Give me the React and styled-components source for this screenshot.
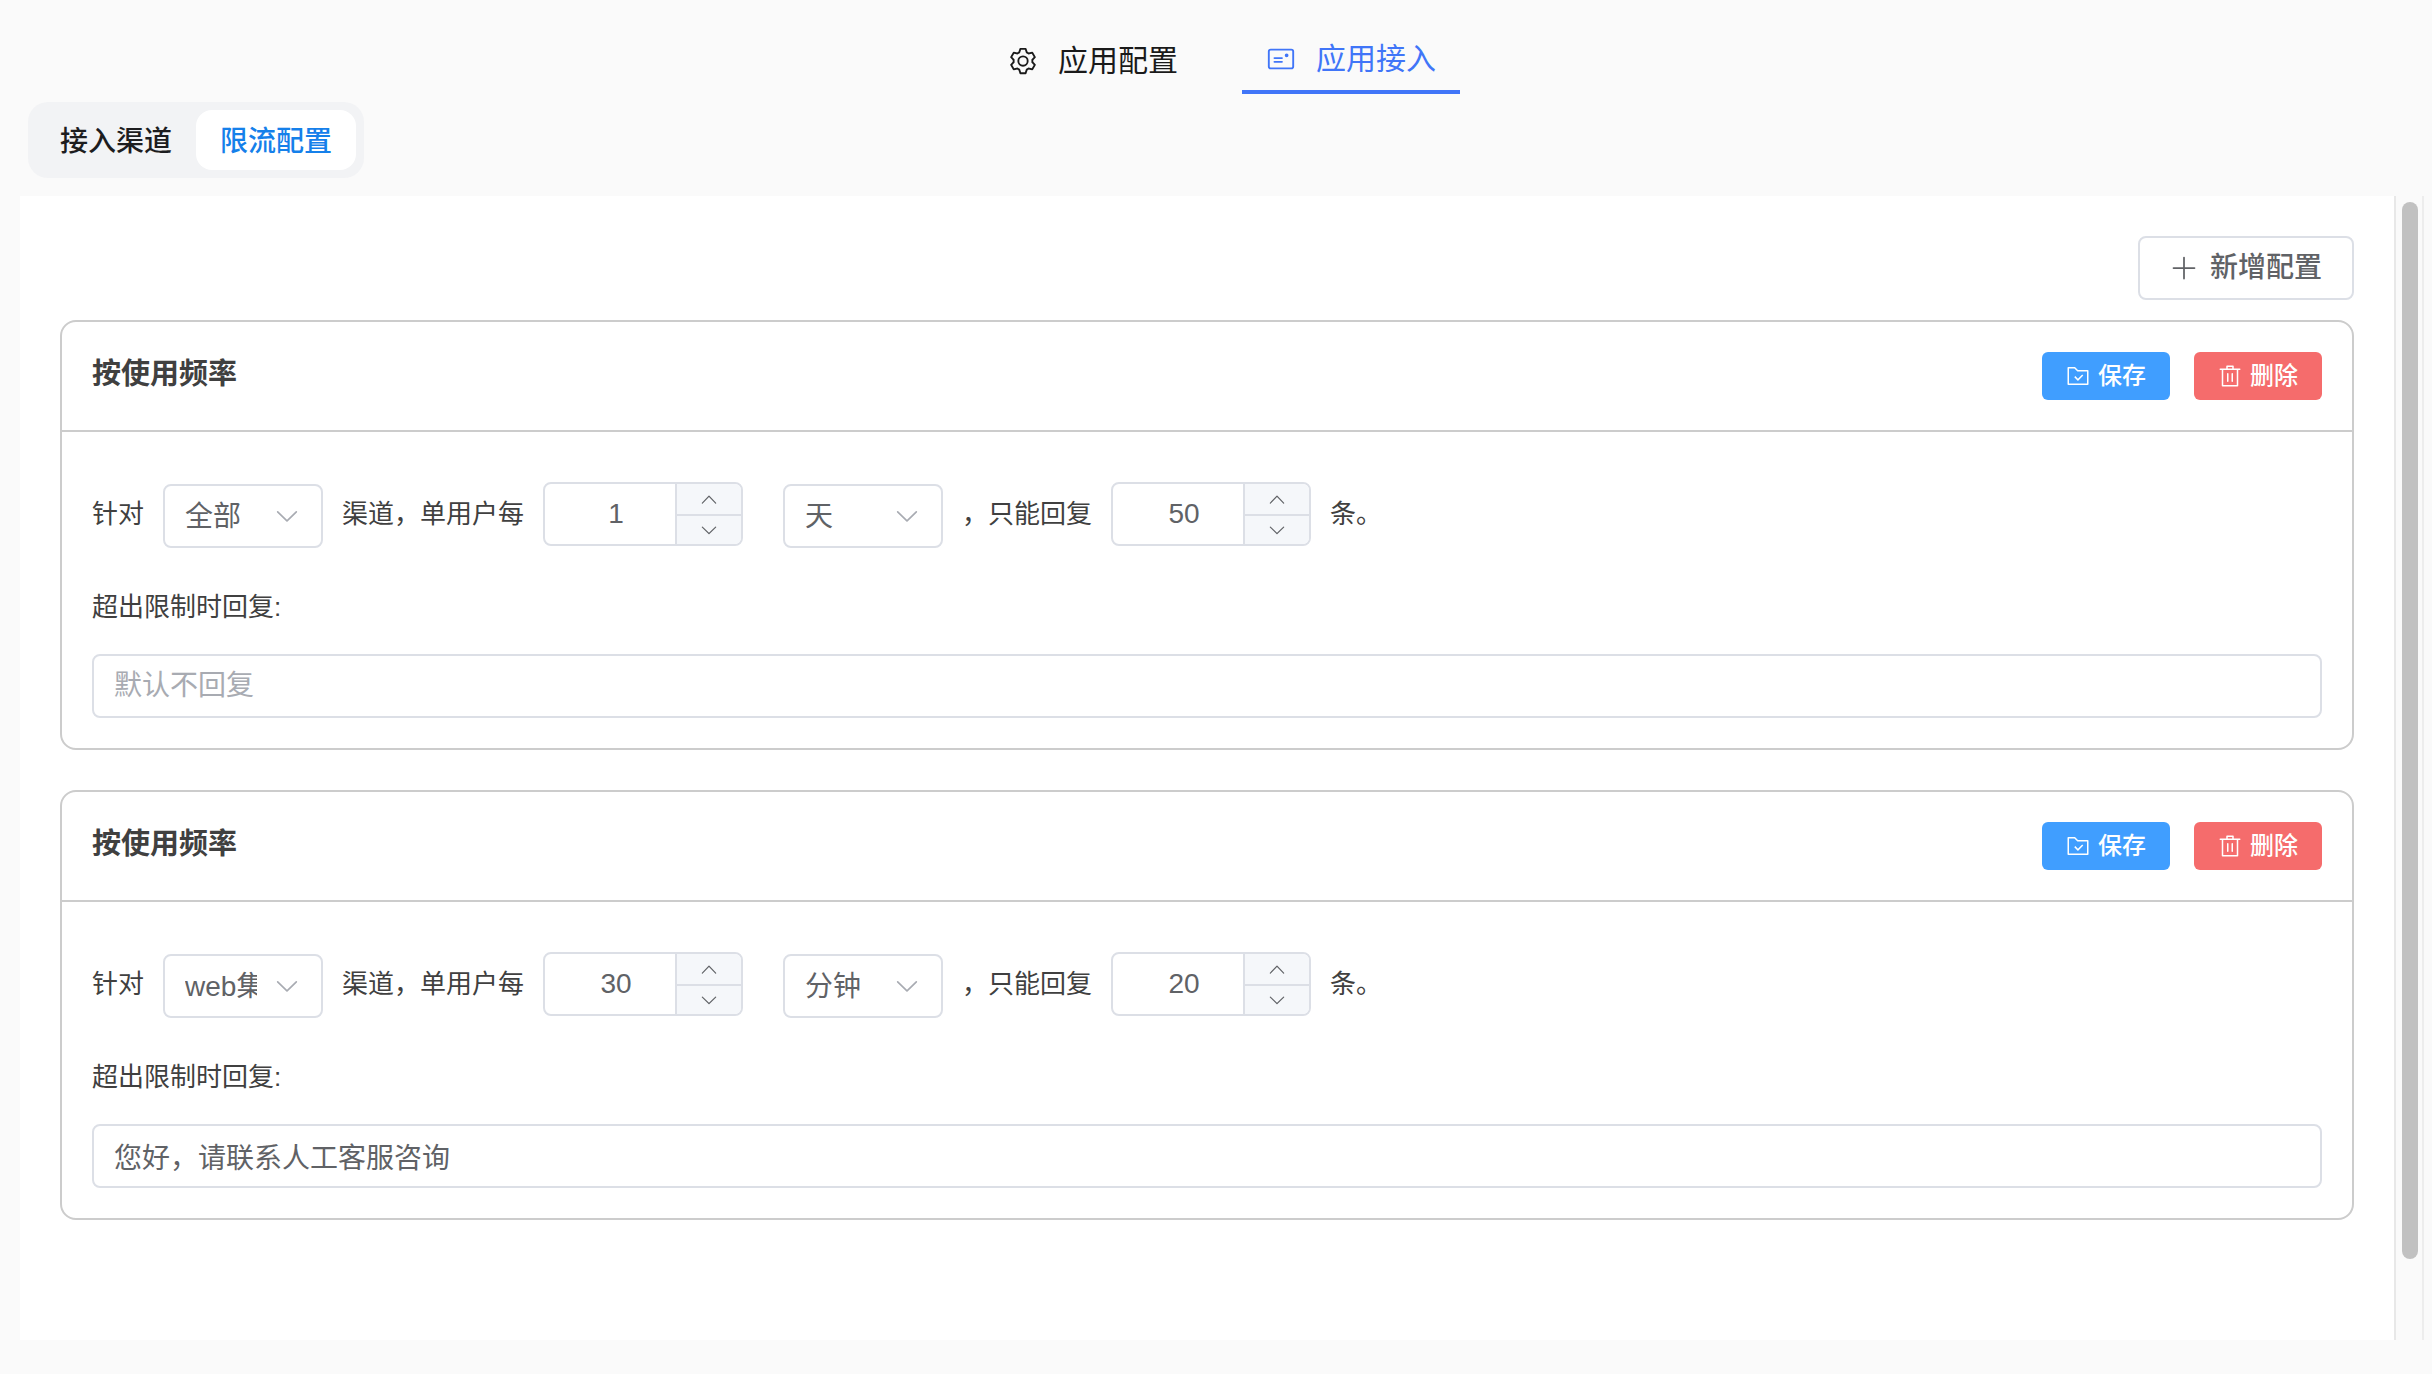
import React, { useState } from 'react';
import styled, { createGlobalStyle } from 'styled-components';

const GlobalStyle = createGlobalStyle`
  *,
  *::before,
  *::after {
    box-sizing: border-box;
  }

  body {
    margin: 0;

    background-color: #fafafa;

    font-family: 'Liberation Sans', 'Noto Sans CJK SC', sans-serif;
    font-size: 26px;
    color: #404040;
  }

  button,
  input,
  select {
    margin: 0;
    font-family: inherit;
  }
`;

const Page = styled.div`
  display: flex;
  flex-direction: column;

  min-height: 100vh;
  padding: 28px 8px 34px 20px;
`;

const Nav = styled.nav`
  display: flex;
  justify-content: center;
  gap: 40px;
`;

const NavLink = styled.a`
  display: flex;
  align-items: center;
  gap: 20px;

  height: 66px;
  padding: 0 24px;

  border-bottom: ${props => (props.$active ? '4px solid #4075f8' : 'none')};

  font-size: 30px;
  line-height: 44px;
  text-decoration: none;
  color: ${props => (props.$active ? '#4075f8' : '#1a1a1a')};
`;

const Segment = styled.div`
  display: flex;
  align-self: flex-start;

  margin: 8px 0 18px 8px;
  padding: 8px;

  background-color: #f2f3f5;
  border-radius: 20px;
`;

const SegmentButton = styled.button`
  height: 60px;
  padding: 0 24px 2px;

  background-color: ${props => (props.$active ? '#fff' : 'transparent')};
  border: none;
  border-radius: 16px;

  font-size: 28px;
  font-weight: 500;
  color: ${props => (props.$active ? '#1580ea' : '#1d1d1f')};

  cursor: pointer;
`;

const Panel = styled.main`
  display: flex;
  flex: 1;
`;

const Content = styled.div`
  display: flex;
  flex-direction: column;
  flex: 1;
  min-width: 0;

  padding: 40px;

  background-color: #fff;
`;

const ScrollTrack = styled.div`
  width: 30px;
  padding: 6px;

  border-left: 2px solid #e8e8e8;
  border-right: 2px solid #ededed;
`;

const ScrollThumb = styled.div`
  width: 16px;
  height: 93.4%;

  background-color: #c1c1c1;
  border-radius: 8px;
`;

const AddButton = styled.button`
  display: flex;
  align-items: center;
  align-self: flex-end;
  gap: 12px;

  height: 64px;
  padding: 0 30px;

  background-color: #fff;
  border: 2px solid #dcdfe6;
  border-radius: 8px;

  font-size: 28px;
  font-weight: 500;
  line-height: 40px;
  color: #606266;

  cursor: pointer;
`;

const CardList = styled.div`
  display: flex;
  flex-direction: column;
  gap: 40px;

  margin-top: 20px;
`;

const Card = styled.section`
  border: 2px solid #ccc;
  border-radius: 16px;
`;

const CardHeader = styled.header`
  display: flex;
  justify-content: space-between;
  align-items: flex-start;

  padding: 30px;

  border-bottom: 2px solid #ccc;
`;

const CardTitle = styled.h2`
  margin: 0;

  font-size: 29px;
  font-weight: 700;
  line-height: 44px;
`;

const Actions = styled.div`
  display: flex;
  gap: 24px;
`;

const ActionButton = styled.button`
  display: flex;
  align-items: center;
  gap: 8px;

  height: 48px;
  padding: 0 24px;

  background-color: ${props => (props.$danger ? '#f56c6c' : '#409eff')};
  border: none;
  border-radius: 6px;

  font-size: 24px;
  font-weight: 500;
  line-height: 40px;
  color: #fff;

  cursor: pointer;
`;

const CardBody = styled.div`
  padding: 48px 30px 30px;
`;

const Rule = styled.div`
  display: flex;
  align-items: center;
  gap: 19px;
`;

const RuleText = styled.span`
  line-height: 40px;
`;

const SelectWrapper = styled.div`
  display: grid;
  align-items: center;

  margin-left: ${props => (props.$spaced ? '21px' : '0')};
  padding-top: 4px;

  > * {
    grid-area: 1 / 1;
  }

  > svg {
    justify-self: end;
    margin-right: 22px;

    color: #a8abb2;
    pointer-events: none;
  }
`;

const StyledSelect = styled.select`
  width: 160px;
  height: 64px;
  padding: 0 64px 0 20px;

  appearance: none;
  background-color: #fff;
  border: 2px solid #dcdfe6;
  border-radius: 8px;

  font-size: 28px;
  color: #606266;
`;

const NumberWrapper = styled.div`
  display: flex;

  width: 200px;
  height: 64px;
  overflow: hidden;

  background-color: #fff;
  border: 2px solid #dcdfe6;
  border-radius: 8px;
`;

const NumberInput = styled.input`
  flex: 1;
  min-width: 0;
  padding: 0 16px 0 28px;

  background: none;
  border: none;
  outline: none;

  font-size: 28px;
  text-align: center;
  color: #606266;
`;

const Stepper = styled.div`
  display: grid;
  grid-template-rows: 1fr 1fr;

  width: 66px;

  border-left: 2px solid #dcdfe6;
`;

const StepButton = styled.button`
  display: flex;
  justify-content: center;
  align-items: center;

  padding: 0;

  background-color: #f5f7fa;
  border: none;

  color: #606266;

  cursor: pointer;

  & + & {
    border-top: 2px solid #dcdfe6;
  }
`;

const ReplyLabel = styled.label`
  display: block;
  margin: 39px 0 27px;

  line-height: 40px;
`;

const ReplyInput = styled.input`
  display: block;

  width: 100%;
  height: 64px;
  padding: 0 20px;

  background-color: #fff;
  border: 2px solid #dcdfe6;
  border-radius: 8px;

  font-size: 28px;
  color: #606266;

  &::placeholder {
    color: #a8abb2;
    opacity: 1;
  }
`;

const icons = {
  setting:
    'M600.704 64a32 32 0 0 1 30.464 22.208l35.2 109.376c14.784 7.232 28.928 15.36 42.432 24.512l112.384-24.192a32 32 0 0 1 34.432 15.36L944.32 364.8a32 32 0 0 1-4.032 37.504l-77.12 85.12a357.12 357.12 0 0 1 0 49.024l77.12 85.248a32 32 0 0 1 4.032 37.504l-88.704 153.6a32 32 0 0 1-34.432 15.296L708.8 803.904c-13.44 9.088-27.648 17.28-42.368 24.512l-35.264 109.376A32 32 0 0 1 600.704 960H423.296a32 32 0 0 1-30.464-22.208L357.696 828.48a351.616 351.616 0 0 1-42.56-24.64l-112.32 24.256a32 32 0 0 1-34.432-15.36L79.68 659.2a32 32 0 0 1 4.032-37.504l77.12-85.248a357.12 357.12 0 0 1 0-48.896l-77.12-85.248A32 32 0 0 1 79.68 364.8l88.704-153.6a32 32 0 0 1 34.432-15.296l112.32 24.256c13.568-9.152 27.776-17.408 42.56-24.64l35.2-109.312A32 32 0 0 1 423.232 64H600.64zm-23.424 64H446.72l-36.352 113.088-24.512 11.968a294.113 294.113 0 0 0-34.816 20.096l-22.656 15.36-116.224-25.088-65.28 113.152 79.68 88.192-1.92 27.136a293.12 293.12 0 0 0 0 40.192l1.92 27.136-79.808 88.192 65.344 113.152 116.224-25.024 22.656 15.296a294.113 294.113 0 0 0 34.816 20.096l24.512 11.968L446.72 896h130.688l36.48-113.152 24.448-11.904a288.282 288.282 0 0 0 34.752-20.096l22.592-15.296 116.288 25.024 65.28-113.152-79.744-88.192 1.92-27.136a293.12 293.12 0 0 0 0-40.256l-1.92-27.136 79.808-88.128-65.344-113.152-116.288 24.96-22.592-15.232a287.616 287.616 0 0 0-34.752-20.096l-24.448-11.904L577.344 128zM512 320a192 192 0 1 1 0 384 192 192 0 0 1 0-384zm0 64a128 128 0 1 0 0 256 128 128 0 0 0 0-256z',
  postcard:
    'M160 224a32 32 0 0 0-32 32v512a32 32 0 0 0 32 32h704a32 32 0 0 0 32-32V256a32 32 0 0 0-32-32H160zm0-64h704a96 96 0 0 1 96 96v512a96 96 0 0 1-96 96H160a96 96 0 0 1-96-96V256a96 96 0 0 1 96-96zM704 320a64 64 0 1 1 0 128 64 64 0 0 1 0-128zM288 448h256q32 0 32 32t-32 32H288q-32 0-32-32t32-32zm0 128h256q32 0 32 32t-32 32H288q-32 0-32-32t32-32z',
  plus:
    'M480 480V128a32 32 0 0 1 64 0v352h352a32 32 0 1 1 0 64H544v352a32 32 0 1 1-64 0V544H128a32 32 0 0 1 0-64h352z',
  folder:
    'M128 192v640h768V320H485.76L357.504 192H128zm-32-64h287.872l128.384 128H928a32 32 0 0 1 32 32v576a32 32 0 0 1-32 32H96a32 32 0 0 1-32-32V160a32 32 0 0 1 32-32zm414.08 502.144 180.992-180.992L736.32 494.4 510.08 720.64l-158.4-158.336 45.248-45.312L510.08 630.144z',
  trash:
    'M160 256H96a32 32 0 0 1 0-64h256V95.936a32 32 0 0 1 32-32h256a32 32 0 0 1 32 32V192h256a32 32 0 1 1 0 64h-64v672a32 32 0 0 1-32 32H192a32 32 0 0 1-32-32V256zm448-64v-64H416v64h192zM224 896h576V256H224v640zm192-128a32 32 0 0 1-32-32V416a32 32 0 0 1 64 0v320a32 32 0 0 1-32 32zm192 0a32 32 0 0 1-32-32V416a32 32 0 0 1 64 0v320a32 32 0 0 1-32 32z',
  up:
    'm488.832 344.32-339.84 356.672a32 32 0 0 0 0 44.16l.384.384a29.44 29.44 0 0 0 42.688 0l320-335.872 319.872 335.872a29.44 29.44 0 0 0 42.688 0l.384-.384a32 32 0 0 0 0-44.16L535.168 344.32a32 32 0 0 0-46.336 0z',
  down:
    'M831.872 340.864 512 652.672 192.128 340.864a30.592 30.592 0 0 0-42.752 0 29.12 29.12 0 0 0 0 41.6L489.664 714.24a32 32 0 0 0 44.672 0l340.288-331.712a29.12 29.12 0 0 0 0-41.728 30.592 30.592 0 0 0-42.752 0z',
};

const Icon = ({ name, size }) => (
  <svg width={size} height={size} viewBox='0 0 1024 1024' fill='currentColor' aria-hidden='true'>
    <path d={icons[name]} />
  </svg>
);

const Select = ({ label, value, options, spaced }) => (
  <SelectWrapper $spaced={spaced}>
    <StyledSelect aria-label={label} defaultValue={value}>
      {options.map(option => <option key={option}>{option}</option>)}
    </StyledSelect>
    <Icon name='down' size={28} />
  </SelectWrapper>
);

const NumberField = ({ label, initial }) => {
  const [value, setValue] = useState(initial);

  return (
    <NumberWrapper>
      <NumberInput
        aria-label={label}
        inputMode='numeric'
        value={value}
        onChange={e => setValue(Number(e.target.value) || 0)}
      />
      <Stepper>
        <StepButton type='button' aria-label='增加' onClick={() => setValue(value + 1)}>
          <Icon name='up' size={20} />
        </StepButton>
        <StepButton type='button' aria-label='减少' onClick={() => setValue(Math.max(1, value - 1))}>
          <Icon name='down' size={20} />
        </StepButton>
      </Stepper>
    </NumberWrapper>
  );
};

const channels = ['全部', 'web集成'];
const units = ['分钟', '小时', '天'];

const limits = [
  { id: 1, channel: '全部', period: 1, unit: '天', count: 50, reply: '' },
  { id: 2, channel: 'web集成', period: 30, unit: '分钟', count: 20, reply: '您好，请联系人工客服咨询' },
];

const LimitCard = ({ id, channel, period, unit, count, reply }) => (
  <Card>
    <CardHeader>
      <CardTitle>按使用频率</CardTitle>
      <Actions>
        <ActionButton type='button'><Icon name='folder' size={24} />保存</ActionButton>
        <ActionButton type='button' $danger><Icon name='trash' size={24} />删除</ActionButton>
      </Actions>
    </CardHeader>
    <CardBody>
      <Rule>
        <RuleText>针对</RuleText>
        <Select label='渠道' value={channel} options={channels} />
        <RuleText>渠道，单用户每</RuleText>
        <NumberField label='周期' initial={period} />
        <Select label='单位' value={unit} options={units} spaced />
        <RuleText>，只能回复</RuleText>
        <NumberField label='条数' initial={count} />
        <RuleText>条。</RuleText>
      </Rule>
      <ReplyLabel htmlFor={`reply-${id}`}>超出限制时回复:</ReplyLabel>
      <ReplyInput id={`reply-${id}`} type='text' placeholder='默认不回复' defaultValue={reply} />
    </CardBody>
  </Card>
);

const App = () => {
  const [section, setSection] = useState('限流配置');

  return (
    <>
      <GlobalStyle />
      <Page>
        <Nav>
          <NavLink href='#config'><Icon name='setting' size={30} />应用配置</NavLink>
          <NavLink href='#access' $active><Icon name='postcard' size={30} />应用接入</NavLink>
        </Nav>
        <Segment>
          {['接入渠道', '限流配置'].map(name => (
            <SegmentButton
              key={name}
              type='button'
              $active={name === section}
              onClick={() => setSection(name)}
            >
              {name}
            </SegmentButton>
          ))}
        </Segment>
        <Panel>
          <Content>
            <AddButton type='button'><Icon name='plus' size={28} />新增配置</AddButton>
            <CardList>
              {limits.map(limit => <LimitCard key={limit.id} {...limit} />)}
            </CardList>
          </Content>
          <ScrollTrack>
            <ScrollThumb />
          </ScrollTrack>
        </Panel>
      </Page>
    </>
  );
};

export default App;
